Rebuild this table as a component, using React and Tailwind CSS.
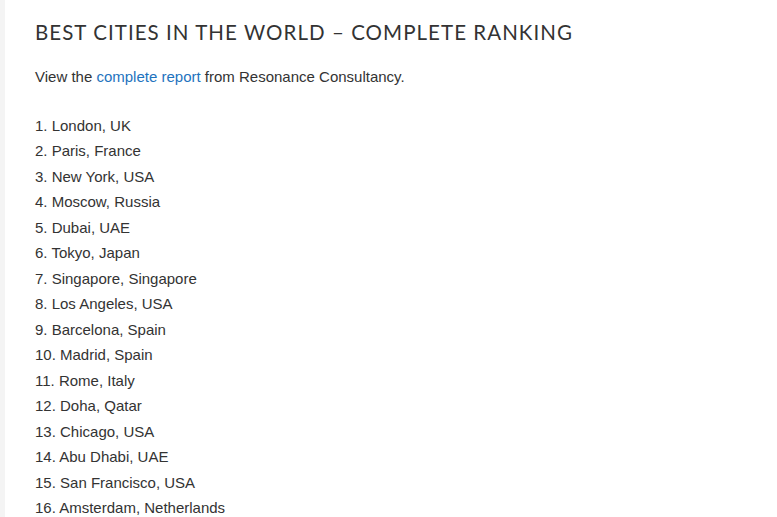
const cities = [
  "London, UK",
  "Paris, France",
  "New York, USA",
  "Moscow, Russia",
  "Dubai, UAE",
  "Tokyo, Japan",
  "Singapore, Singapore",
  "Los Angeles, USA",
  "Barcelona, Spain",
  "Madrid, Spain",
  "Rome, Italy",
  "Doha, Qatar",
  "Chicago, USA",
  "Abu Dhabi, UAE",
  "San Francisco, USA",
  "Amsterdam, Netherlands",
];

export default function App() {
  return (
    <div className="flex h-[517px] overflow-hidden bg-white">
      <div className="w-[5px] shrink-0 bg-[#f4f4f4]" />
      <div className="flex-1 pl-[30px] pt-[18px]">
        <h1 className="font-['Lato',sans-serif] text-[20.5px] leading-[28px] tracking-[1.05px] text-[#333] font-normal">
          BEST CITIES IN THE WORLD – COMPLETE RANKING
        </h1>
        <div className="mt-[18px] font-['Liberation_Sans',Arial,sans-serif] text-[15px] leading-[25.5px] text-[#333]">
          <p>
            View the{" "}
            <a href="#" className="text-[#1e73be]">
              complete report
            </a>{" "}
            from Resonance Consultancy.
          </p>
          <div className="mt-[23px]">
            {cities.map((c, i) => (
              <div key={c}>
                {i + 1}. {c}
              </div>
            ))}
          </div>
        </div>
      </div>
    </div>
  );
}
